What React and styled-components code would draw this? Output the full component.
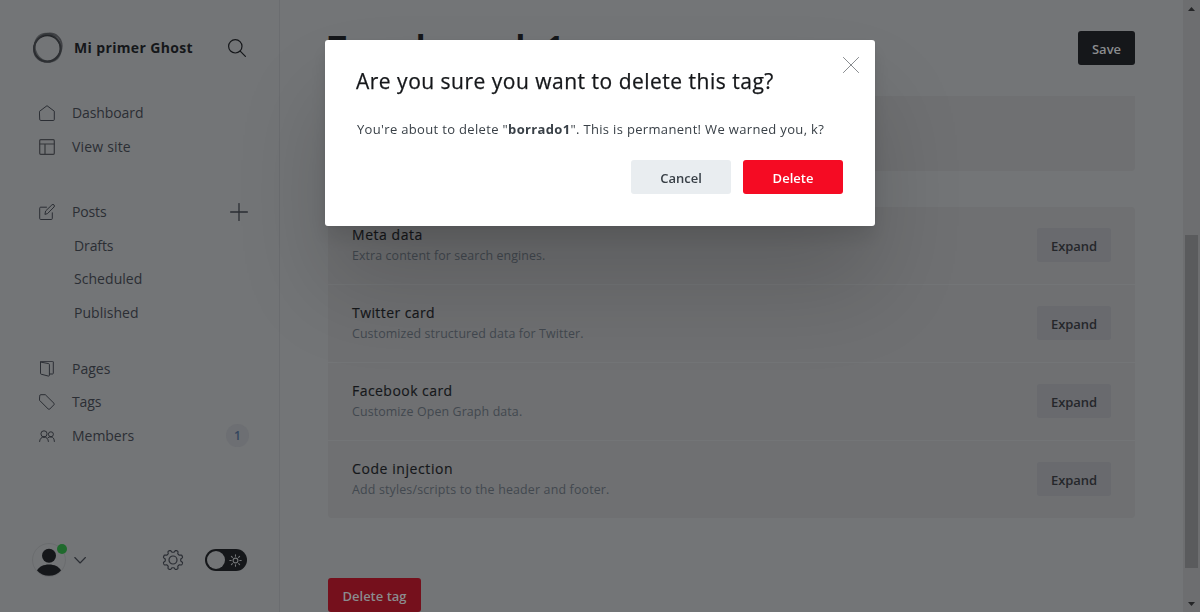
import React from "react";
import styled, { createGlobalStyle } from "styled-components";

const Global = createGlobalStyle`
  * { box-sizing: border-box; }
  body {
    margin: 0;
    overflow: hidden;
    background: #737577;
    font-family: "Open Sans", "Noto Sans", sans-serif;
    color: #15171a;
  }
  button { font-family: inherit; border: 0; padding: 0; }
  svg { display: block; flex: none; fill: none; stroke: currentColor; stroke-linecap: round; stroke-linejoin: round; }
`;

const Page = styled.div`
  display: flex;
  width: 1200px;
  height: 612px;
  overflow: hidden;
`;

const Sidebar = styled.aside`
  width: 280px;
  flex: none;
  display: flex;
  flex-direction: column;
  border-right: 1px solid #6b6d70;
  color: #2b2e34;
`;

const SiteHeader = styled.header`
  display: flex;
  align-items: center;
  height: 32px;
  margin: 32px 33px 32.3px 32px;
  color: #15171a;
`;

const SiteName = styled.div`
  flex: 1;
  margin-left: 10px;
  font-size: 14px;
  font-weight: 700;
  line-height: 20px;
  white-space: nowrap;
  letter-spacing: ${(p) => p.$spacing}px;
`;

const NavGroup = styled.nav`
  display: flex;
  flex-direction: column;
  padding: 0 31px 0 39px;
  margin-bottom: ${(p) => p.$gap}px;
`;

const NavItem = styled.a`
  display: flex;
  align-items: center;
  height: 33.5px;
  padding-left: ${(p) => (p.$sub ? 35 : 0)}px;
`;

const NavIcon = styled.span`
  width: 33px;
  flex: none;
`;

const NavLabel = styled.span`
  flex: 1;
  font-size: 14px;
  line-height: 20px;
  white-space: nowrap;
  letter-spacing: ${(p) => p.$spacing}px;
`;

const Count = styled.span`
  display: grid;
  place-items: center;
  width: 23px;
  height: 23px;
  margin-right: -1px;
  border-radius: 50%;
  background: #6d6f73;
  color: #33455d;
  font-size: 12px;
  font-weight: 600;
`;

const SidebarFooter = styled.footer`
  display: flex;
  align-items: center;
  height: 34px;
  margin: auto 32px 35px;
`;

const Avatar = styled.div`
  position: relative;
  width: 34px;
  height: 34px;
  color: #15171a;
`;

const OnlineDot = styled.span`
  position: absolute;
  top: 1px;
  right: -1px;
  width: 10px;
  height: 10px;
  border-radius: 50%;
  background: #1f6a2d;
`;

const FooterSpacer = styled.div`
  flex: 1;
`;

const Toggle = styled.div`
  display: flex;
  align-items: center;
  justify-content: space-between;
  width: 42px;
  height: 22px;
  margin-left: 21px;
  padding: 2px 5px 2px 2px;
  border-radius: 11px;
  background: #15171a;
  color: #737577;
`;

const Knob = styled.span`
  width: 18px;
  height: 18px;
  border-radius: 50%;
  background: #737577;
`;

const Main = styled.main`
  flex: 1;
  display: flex;
  flex-direction: column;
  align-items: stretch;
  padding: 0 48px;
`;

const TitleBar = styled.header`
  display: flex;
  align-items: center;
  justify-content: space-between;
  height: 96px;
  flex: none;
`;

const Title = styled.h1`
  display: flex;
  align-items: center;
  gap: 3px;
  margin: 0 0 3px;
  font-size: 32px;
  line-height: 40px;
  font-weight: 700;
  letter-spacing: 0.2px;
`;

const Button = styled.button`
  display: flex;
  align-items: center;
  justify-content: center;
  flex: none;
  width: ${(p) => p.$width}px;
  height: 34px;
  padding-top: 1px;
  border-radius: 3px;
  background: ${(p) => p.$bg};
  color: ${(p) => p.$fg};
  font-size: 13px;
  font-weight: 600;
  line-height: 20px;
  white-space: nowrap;
  letter-spacing: ${(p) => p.$spacing || 0}px;
`;

const FormPanel = styled.section`
  height: 75px;
  flex: none;
  border-radius: 0 0 4px 4px;
  background: #6f7072;
`;

const Settings = styled.section`
  margin-top: 36px;
  flex: none;
  border-radius: 4px;
  background: #6f7072;
`;

const SettingRow = styled.div`
  display: flex;
  justify-content: space-between;
  height: 78px;
  padding: 21px 24px 0;
  border-bottom: 1px solid #737577;
  &:last-child { border-bottom: 0; height: 77px; }
`;

const SettingTitle = styled.h4`
  margin: -3px 0 0;
  font-size: 14px;
  font-weight: 500;
  line-height: 20px;
  letter-spacing: ${(p) => p.$spacing}px;
  -webkit-text-stroke: 0.15px currentColor;
`;

const SettingText = styled.p`
  margin: 1px 0 0;
  font-size: 12.4px;
  line-height: 20px;
  color: #42484f;
  letter-spacing: ${(p) => p.$spacing}px;
`;

const DangerZone = styled.div`
  margin-top: 60px;
`;

const Scrollbar = styled.div`
  width: 17px;
  flex: none;
  display: flex;
  flex-direction: column;
  align-items: center;
  background: #6d6e70;
  color: #242527;
`;

const Thumb = styled.div`
  width: 13px;
  height: 333px;
  margin: 218px 0 auto;
  background: #5a5b5d;
`;

const Arrow = styled.div`
  height: 17px;
  display: grid;
  place-items: center;
  svg { fill: currentColor; stroke: none; }
`;

const Overlay = styled.div`
  position: fixed;
  inset: 0;
  display: flex;
  justify-content: center;
  align-items: flex-start;
  padding-top: 40px;
`;

const Modal = styled.div`
  position: relative;
  width: 550px;
  height: 186px;
  padding: 26px 32px 32px;
  border-radius: 3px;
  background: #fff;
  box-shadow:
    0 1px 5px rgba(0, 0, 0, 0.06),
    0 12px 20px rgba(0, 0, 0, 0.09),
    0 60px 90px rgba(0, 0, 0, 0.16);
`;

const ModalTitle = styled.h2`
  margin: 0 0 0 -1px;
  font-size: 21px;
  font-weight: 500;
  line-height: 30px;
  white-space: nowrap;
  letter-spacing: 0.5px;
  -webkit-text-stroke: 0.25px currentColor;
`;

const ModalText = styled.p`
  margin: 23px 0 0;
  font-size: 13px;
  line-height: 20px;
  color: #394047;
  white-space: nowrap;
  letter-spacing: 0.335px;
`;

const ModalActions = styled.div`
  display: flex;
  justify-content: flex-end;
  gap: 12px;
  margin-top: 21px;
`;

const Close = styled.button`
  position: absolute;
  top: 17px;
  right: 16px;
  background: none;
  color: #7c7f83;
`;

const Icon = ({ size = 16, width = 1, children }) => (
  <svg width={size} height={size} viewBox={`0 0 ${size} ${size}`} strokeWidth={width}>
    {children}
  </svg>
);

const Logo = () => (
  <Icon size={32}>
    <circle cx="15.300" cy="16.400" r="13.2" strokeWidth="1.900" stroke="#232528" />
    <ellipse cx="16.200" cy="15.600" rx="14.800" ry="13" strokeWidth="1.900" stroke="#303235" opacity=".75" transform="rotate(-48 16 16)" />
    <ellipse cx="15.600" cy="16" rx="14.500" ry="12.600" strokeWidth="1.700" stroke="#303235" opacity=".65" transform="rotate(62 16 16)" />
  </Icon>
);

const icons = {
  home: <path d="M.7 6.2 8 .7l7.3 5.5v8.3a1 1 0 0 1-1 1H1.700a1 1 0 0 1-1-1z" />,
  site: (
    <g stroke="#35373b" strokeWidth="1.200">
      <rect x=".7" y=".7" width="14.600" height="14.600" rx="1" />
      <path d="M.7 5h14.600M6 5v10.300" />
    </g>
  ),
  posts: <path d="M7.500 3.200H1.700a1 1 0 0 0-1 1v10.300a1 1 0 0 0 1 1h10.600a1 1 0 0 0 1-1V8.800M6 10l.6-3L12.900.9a1.400 1.400 0 0 1 2.100 2.100L8.800 9.300z" />,
  pages: <path d="M1.500 1.200v11.300c0 .4.200.6.600.7l7.400 1.900c.5.100.9-.2.9-.700V3.500c0-.4-.3-.8-.7-.9L1.700 1.100M1.500 1c0-.4.300-.7.700-.7h11.400c.4 0 .7.300.7.700v11.300c0 .4-.3.700-.7.700h-3.200" />,
  tags: <path d="M.7 1.700a1 1 0 0 1 1-1h4.600l8.700 8.600a1 1 0 0 1 0 1.400l-4.300 4.400a1 1 0 0 1-1.400 0L.7 6.500z" />,
  members: <path d="M.6 13.500C.8 10.700 2.500 9 5 9s4.200 1.700 4.400 4.500M9 9.700c.7-.6 1.600-.9 2.700-.9 2.300 0 3.600 1.700 3.700 4.700M5 9a3.100 3.100 0 1 0 0-6.200A3.100 3.100 0 0 0 5 9zM11.900 8.800a2.500 2.500 0 1 0 0-5 2.500 2.500 0 0 0 0 5z" />,
};

const navGroups = [
  {
    gap: 32,
    items: [
      { label: "Dashboard", icon: "home", spacing: -0.1 },
      { label: "View site", icon: "site", spacing: 0.18 },
    ],
  },
  {
    gap: 22.5,
    items: [
      { label: "Posts", icon: "posts", spacing: -0.15, add: true },
      { label: "Drafts", sub: true, spacing: -0.12 },
      { label: "Scheduled", sub: true, spacing: 0.05 },
      { label: "Published", sub: true, spacing: 0.02 },
    ],
  },
  {
    gap: 0,
    items: [
      { label: "Pages", icon: "pages", spacing: 0 },
      { label: "Tags", icon: "tags", spacing: -0.1 },
      { label: "Members", icon: "members", spacing: -0.03, count: 1 },
    ],
  },
];

const settings = [
  { title: "Meta data", text: "Extra content for search engines.", titleSpacing: 0.55, textSpacing: 0.1 },
  { title: "Twitter card", text: "Customized structured data for Twitter.", titleSpacing: 0.42, textSpacing: 0.1 },
  { title: "Facebook card", text: "Customize Open Graph data.", titleSpacing: 0.45, textSpacing: 0.12 },
  { title: "Code injection", text: "Add styles/scripts to the header and footer.", titleSpacing: 0.58, textSpacing: 0.17 },
];

const gearPath = (() => {
  const pts = [];
  const n = 8;
  for (let i = 0; i < n * 24; i++) {
    const a = (i / (n * 24)) * Math.PI * 2 + Math.PI / 8;
    const r = 8.85 + 1.15 * Math.tanh(2.2 * Math.cos(n * a + Math.PI));
    pts.push(`${(11 + r * Math.cos(a)).toFixed(2)} ${(11 + r * Math.sin(a)).toFixed(2)}`);
  }
  return `M${pts.join("L")}z`;
})();

export default function App() {
  return (
    <>
      <Global />
      <Page>
        <Sidebar>
          <SiteHeader>
            <Logo />
            <SiteName $spacing={0.36}>Mi primer Ghost</SiteName>
            <Icon size={18} width={1.2}>
              <circle cx="7.300" cy="7.300" r="6.700" />
              <path d="m12.200 12.200 5.200 5.200" />
            </Icon>
          </SiteHeader>
          {navGroups.map((group, i) => (
            <NavGroup key={i} $gap={group.gap}>
              {group.items.map((item) => (
                <NavItem key={item.label} $sub={item.sub}>
                  {item.icon && (
                    <NavIcon>
                      <Icon>{icons[item.icon]}</Icon>
                    </NavIcon>
                  )}
                  <NavLabel $spacing={item.spacing}>{item.label}</NavLabel>
                  {item.add && (
                    <Icon size={18} width={1.3}>
                      <path d="M9 .6v16.800M.6 9h16.800" />
                    </Icon>
                  )}
                  {item.count && <Count>{item.count}</Count>}
                </NavItem>
              ))}
            </NavGroup>
          ))}
          <SidebarFooter>
            <Avatar>
              <Icon size={34}>
                <circle cx="17" cy="17" r="16.500" stroke="#6b6d6f" />
                <circle cx="17" cy="12.700" r="7" fill="currentColor" stroke="none" />
                <path d="M5 27.500c2.200-4 6.500-6 12-6s9.800 2 12 6c-3 3.500-7.200 5.300-12 5.300S8 31 5 27.500z" fill="currentColor" stroke="none" />
              </Icon>
              <OnlineDot />
            </Avatar>
            <Icon size={28} width={1.1}>
              <path d="m8.800 11.500 5.300 5.500 5.300-5.500" />
            </Icon>
            <FooterSpacer />
            <Icon size={22} width={1.2}>
              <path d={gearPath} />
              <circle cx="11" cy="11" r="4" />
            </Icon>
            <Toggle>
              <Knob />
              <Icon size={13} width={1.1}>
                <circle cx="6.500" cy="6.500" r="2.400" />
                <path d="M6.500.8v1.400M6.500 10.800v1.400M.8 6.500h1.400M10.800 6.500h1.400M2.400 2.400l1 1M9.600 9.600l1 1M2.400 10.600l1-1M9.600 3.400l1-1" />
              </Icon>
            </Toggle>
          </SidebarFooter>
        </Sidebar>
        <Main>
          <TitleBar>
            <Title>
              <span>Tags</span>
              <Icon size={9} width={1.5}>
                <path d="m2.500 1 4 3.500-4 3.500" />
              </Icon>
              <span>borrado1</span>
            </Title>
            <Button $width={57} $bg="#15171a" $fg="#8a8c8e">Save</Button>
          </TitleBar>
          <FormPanel />
          <Settings>
            {settings.map((s) => (
              <SettingRow key={s.title}>
                <div>
                  <SettingTitle $spacing={s.titleSpacing}>{s.title}</SettingTitle>
                  <SettingText $spacing={s.textSpacing}>{s.text}</SettingText>
                </div>
                <Button $width={74} $bg="#696a6e" $fg="#25272b" $spacing={-0.1}>Expand</Button>
              </SettingRow>
            ))}
          </Settings>
          <DangerZone>
            <Button $width={93} $bg="#75101c" $fg="#8a8c8e">Delete tag</Button>
          </DangerZone>
        </Main>
        <Scrollbar>
          <Arrow>
            <svg width="7" height="4" viewBox="0 0 7 4"><path d="M0 4 3.500 0 7 4z" /></svg>
          </Arrow>
          <Thumb />
          <Arrow>
            <svg width="7" height="4" viewBox="0 0 7 4"><path d="M0 0 3.500 4 7 0z" /></svg>
          </Arrow>
        </Scrollbar>
      </Page>
      <Overlay>
        <Modal>
          <ModalTitle>Are you sure you want to delete this tag?</ModalTitle>
          <ModalText>
            You're about to delete "<strong>borrado1</strong>". This is permanent! We warned you, k?
          </ModalText>
          <ModalActions>
            <Button $width={100} $bg="#e9edf0" $fg="#394047">Cancel</Button>
            <Button $width={100} $bg="#f50b23" $fg="#fff">Delete</Button>
          </ModalActions>
          <Close aria-label="Close">
            <Icon size={16} width={0.9}>
              <path d="m.4.4 15.200 15.200M15.600.4.4 15.600" />
            </Icon>
          </Close>
        </Modal>
      </Overlay>
    </>
  );
}
